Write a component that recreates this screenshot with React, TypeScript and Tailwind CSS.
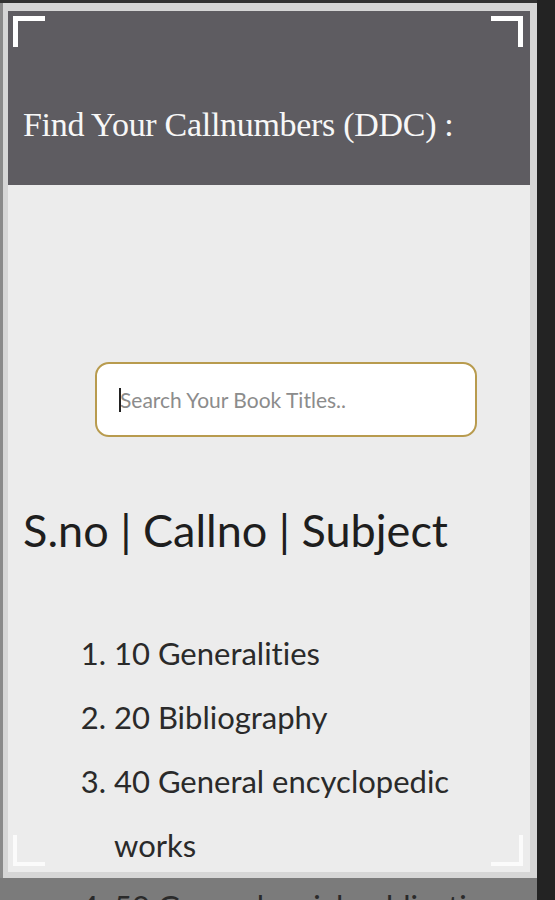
import React from 'react';

const subjects = [
  { no: 10, name: 'Generalities' },
  { no: 20, name: 'Bibliography' },
  { no: 40, name: 'General encyclopedic works' },
  { no: 50, name: 'General serial publications' },
];

// white L-shaped frame marks in the corners of the capture
const Corner: React.FC<{ className: string }> = ({ className }) => (
  <div className={`absolute w-[32px] h-[31px] border-white ${className}`} />
);

export default function App() {
  return (
    <div className="relative w-[555px] h-[900px] overflow-hidden bg-[#232323] font-['Lato',sans-serif] [font-variant-ligatures:none]">
      <div className="w-[537px] h-full flex flex-col bg-[#333333] pt-[3px]">
        {/* Frame */}
        <div className="h-[875px] shrink-0 flex flex-col bg-[#d6d6d6] border-l-[3px] border-[#8a8a8a] pl-[5px] pr-[7px] pt-[8px] pb-[6px]">
          {/* Header */}
          <div className="h-[174px] shrink-0 bg-[#5e5c61] pl-[15px] pt-[94px]">
            <h1 className="font-['Liberation_Serif',serif] text-[34px] leading-[40px] text-[#f7f7f7] tracking-[-0.3px]">
              Find Your Callnumbers (DDC) :
            </h1>
          </div>

          {/* Body */}
          <div className="flex-1 overflow-hidden bg-[#ececec] flex flex-col pt-[177px] pl-[15px]">
            <div className="relative ml-[72px] w-[382px] h-[75px] shrink-0">
              <input
                type="text"
                placeholder="Search Your Book Titles.."
                className="w-full h-full rounded-[14px] border-2 border-[#b89b4e] bg-white pl-[23px] text-[21px] text-[#333] placeholder:text-[#8c8c8c] outline-none"
              />
              <span className="absolute left-[24px] top-[26px] w-[1.5px] h-[24px] bg-[#222]" />
            </div>

            <h2 className="mt-[71px] text-[45px] leading-none text-[#1e1e1e]">
              S.no | Callno | Subject
            </h2>

            <ol className="list-decimal pl-[91px] pr-[20px] mt-[68px] text-[31px] leading-[64px] text-[#2a2a2a]">
              {subjects.slice(0, 3).map(s => (
                <li key={s.no}>
                  {s.no} {s.name}
                </li>
              ))}
            </ol>
          </div>
        </div>

        {/* Page continues below the frame */}
        <div className="flex-1 bg-[#7b7b7b] overflow-hidden">
          <ol start={4} className="list-decimal pl-[114px] pt-[8px] text-[31px] leading-[40px] text-[#2a2a2a]">
            <li>
              {subjects[3].no} {subjects[3].name}
            </li>
          </ol>
        </div>
      </div>

      <Corner className="left-[13px] top-[16px] border-l-[5px] border-t-[5px]" />
      <Corner className="left-[491px] top-[16px] border-r-[5px] border-t-[5px]" />
      <Corner className="left-[13px] top-[835px] border-l-[4px] border-b-[4px] opacity-80" />
      <Corner className="left-[491px] top-[835px] border-r-[4px] border-b-[4px] opacity-80" />
    </div>
  );
}
